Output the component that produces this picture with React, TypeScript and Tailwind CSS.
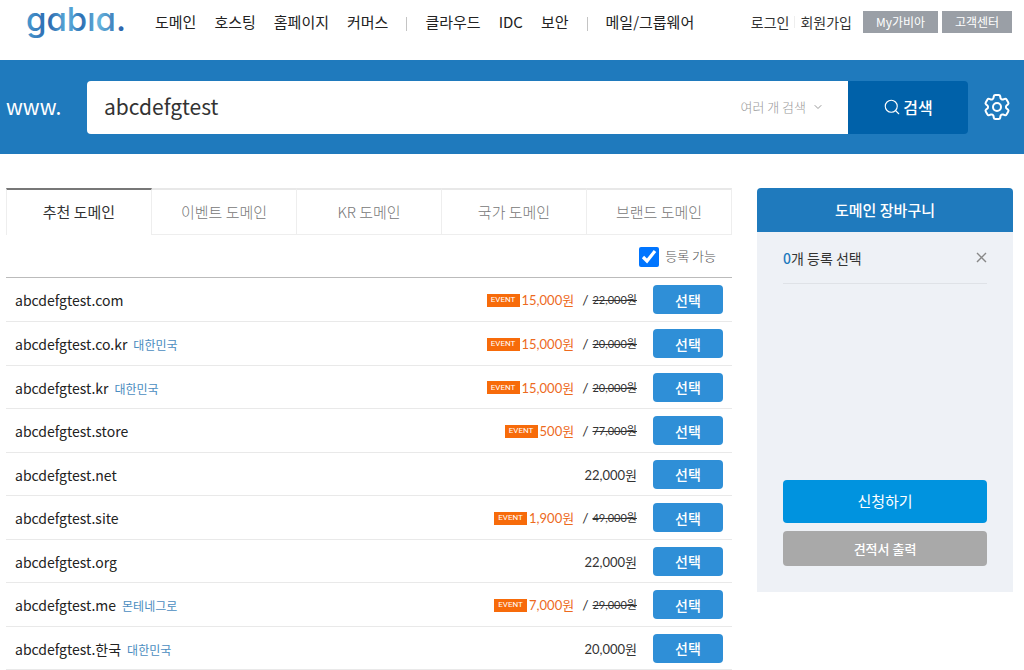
import React, { useState } from 'react';
import { ChevronDown, Search } from 'lucide-react';
import { HiOutlineCog6Tooth } from 'react-icons/hi2';

interface Domain {
  name: string;
  country?: string;
  price: string;
  before?: string;
}

const MENU = [
  ['도메인', '호스팅', '홈페이지', '커머스'],
  ['클라우드', 'IDC', '보안'],
  ['메일/그룹웨어'],
];

const TABS = ['추천 도메인', '이벤트 도메인', 'KR 도메인', '국가 도메인', '브랜드 도메인'];

const DOMAINS: Domain[] = [
  { name: 'abcdefgtest.com', price: '15,000원', before: '22,000원' },
  { name: 'abcdefgtest.co.kr', country: '대한민국', price: '15,000원', before: '20,000원' },
  { name: 'abcdefgtest.kr', country: '대한민국', price: '15,000원', before: '20,000원' },
  { name: 'abcdefgtest.store', price: '500원', before: '77,000원' },
  { name: 'abcdefgtest.net', price: '22,000원' },
  { name: 'abcdefgtest.site', price: '1,900원', before: '49,000원' },
  { name: 'abcdefgtest.org', price: '22,000원' },
  { name: 'abcdefgtest.me', country: '몬테네그로', price: '7,000원', before: '29,000원' },
  { name: 'abcdefgtest.한국', country: '대한민국', price: '20,000원' },
];

const Logo = () => (
  <svg width="108" height="44" viewBox="0 0 108 44" role="img" aria-label="gabia">
    <defs>
      <linearGradient id="logo" x1="0" y1="0" x2="1" y2="0">
        <stop offset="0" stopColor="#4a9bd0" />
        <stop offset="0.22" stopColor="#2a66ad" />
        <stop offset="0.42" stopColor="#5fb0dc" />
        <stop offset="0.56" stopColor="#2d70b4" />
        <stop offset="0.72" stopColor="#68b7de" />
        <stop offset="1" stopColor="#2457a3" />
      </linearGradient>
    </defs>
    <text
      x="0"
      y="31"
      fill="url(#logo)"
      className="font-['Inter',sans-serif] text-[33px] font-medium [font-feature-settings:'cv11']"
    >
      gabıa.
    </text>
  </svg>
);

const Close = () => (
  <svg width="11" height="11" viewBox="0 0 11 11" fill="none" stroke="currentColor" strokeWidth="1.4">
    <path d="M1 1l9 9M10 1l-9 9" />
  </svg>
);

function Header() {
  return (
    <header className="flex h-[60px] items-start justify-between pr-3 pl-[26px]">
      <div className="flex">
        <a href="#home" className="w-[129px]">
          <Logo />
        </a>
        <nav className="flex h-11 items-center gap-[18px] text-[15px] text-[#222]">
          {MENU.map((group, i) => (
            <React.Fragment key={i}>
              {i > 0 && <span className="mt-1 h-[14px] w-px bg-[#c4c4c4]" />}
              {group.map((item) => (
                <a key={item} href="#menu" className="whitespace-nowrap">{item}</a>
              ))}
            </React.Fragment>
          ))}
        </nav>
      </div>
      <div className="flex h-11 items-center whitespace-nowrap text-sm text-[#333]">
        <a href="#login">로그인</a>
        <span className="mx-[5px] h-3 w-px bg-[#eee]" />
        <a href="#join">회원가입</a>
        <a href="#my" className="ml-[11px] flex h-[22px] w-[75px] items-center justify-center bg-[#9a9fa6] text-xs text-white">
          My가비아
        </a>
        <a href="#help" className="ml-1 flex h-[22px] w-[70px] items-center justify-center bg-[#9a9fa6] text-xs text-white">
          고객센터
        </a>
      </div>
    </header>
  );
}

function SearchBar() {
  const [query, setQuery] = useState('abcdefgtest');

  return (
    <form onSubmit={(e) => e.preventDefault()} className="flex h-[94px] items-center bg-[#1f7abd] pr-[11px] pl-[6px]">
      <label htmlFor="domain" className="w-[81px] text-[21px] text-white">www.</label>
      <div className="flex h-[53px] flex-1 items-center rounded-l bg-white pr-6 pl-[17px]">
        <input
          id="domain"
          type="text"
          value={query}
          onChange={(e) => setQuery(e.target.value)}
          className="min-w-0 flex-1 bg-transparent text-[21px] text-[#333] outline-none"
        />
        <button type="button" className="flex items-center gap-[6px] text-[13px] font-light text-[#999]">
          여러 개 검색
          <ChevronDown className="h-3 w-3" />
        </button>
      </div>
      <button type="submit" className="flex h-[53px] w-[120px] items-center justify-center gap-[2px] rounded-r bg-[#0061a9] font-medium text-white">
        <Search className="h-[18px] w-[18px]" strokeWidth={1.5} />
        검색
      </button>
      <button type="button" aria-label="설정" className="ml-[13px] text-white">
        <HiOutlineCog6Tooth className="h-8 w-8" />
      </button>
    </form>
  );
}

function DomainRow({ domain }: { domain: Domain }) {
  return (
    <tr className="h-[43px] border-b border-[#e9e9e9] even:h-11">
      <td className="pt-[2px] pl-[9px] text-sm leading-5 text-[#222]">
        {domain.name}
        {domain.country && <span className="ml-[6px] text-xs text-[#4b8dc0]">{domain.country}</span>}
      </td>
      <td className="pr-4">
        <div className="flex items-center justify-end pt-[2px] font-['Lato','Noto_Sans_CJK_KR',sans-serif] text-[13px] leading-5 text-[#333]">
          {domain.before ? (
            <>
              <span className="mr-[2px] flex h-[13px] w-[33px] items-center justify-center bg-[#f76b0a] font-['Roboto',sans-serif] text-[8px] text-white">EVENT</span>
              <span className="text-[#ed6a1e]">{domain.price}</span>
              <span className="mr-1 ml-2 text-sm">/</span>
              <s className="text-[11px]">{domain.before}</s>
            </>
          ) : (
            <span>{domain.price}</span>
          )}
        </div>
      </td>
      <td className="w-[79px] pt-px">
        <button type="button" className="block h-[29px] w-[70px] rounded-sm bg-[#2f8fd7] text-sm font-medium text-white">
          선택
        </button>
      </td>
    </tr>
  );
}

function Results() {
  const [tab, setTab] = useState(0);

  return (
    <section className="min-w-0 flex-1">
      <div role="tablist" className="flex">
        {TABS.map((label, i) => (
          <button
            key={label}
            type="button"
            role="tab"
            aria-selected={tab === i}
            onClick={() => setTab(i)}
            className={
              tab === i
                ? 'h-[47px] flex-1 border-t-2 border-x border-t-[#777] border-x-[#eee] text-[15px] text-[#333]'
                : 'h-[47px] flex-1 border-t-2 border-r border-b border-t-[#e8e8e8] border-r-[#eee] border-b-[#eee] text-[15px] font-light text-[#777]'
            }
          >
            {label}
          </button>
        ))}
      </div>
      <div className="flex h-[43px] items-center justify-end border-b border-[#bbb] pr-4">
        <label className="flex items-center gap-[6px] text-[13px] font-light text-[#555]">
          <input type="checkbox" defaultChecked className="mt-[2px] h-5 w-5 accent-[#0075ff]" />
          등록 가능
        </label>
      </div>
      <table className="w-full border-collapse">
        <tbody>
          {DOMAINS.map((domain) => (
            <DomainRow key={domain.name} domain={domain} />
          ))}
        </tbody>
      </table>
    </section>
  );
}

function Cart() {
  return (
    <aside className="w-64 shrink-0 self-start">
      <h2 className="flex h-11 items-center justify-center rounded-t bg-[#1f7abd] text-[15px] font-medium text-white">
        도메인 장바구니
      </h2>
      <div className="bg-[#eef1f6] px-[26px] pt-2 pb-[26px]">
        <div className="flex h-11 items-center justify-between border-b border-[#dfe2e7] pb-2 text-sm text-[#333]">
          <p>
            <strong className="font-medium text-[#1f7abd]">0</strong>개 등록 선택
          </p>
          <button type="button" aria-label="모두 삭제" className="text-[#888]">
            <Close />
          </button>
        </div>
        <div className="h-[196px]" />
        <button type="button" className="block h-[43px] w-full rounded-sm bg-[#0093df] text-[15px] text-white">
          신청하기
        </button>
        <button type="button" className="mt-2 block h-[35px] w-full rounded-sm bg-[#a9a9a9] text-[13px] font-medium text-white">
          견적서 출력
        </button>
      </div>
    </aside>
  );
}

export default function App() {
  return (
    <div className="min-h-screen bg-white font-['Noto_Sans_CJK_KR',sans-serif]">
      <Header />
      <SearchBar />
      <main className="flex gap-[25px] pt-[34px] pr-[11px] pl-[6px]">
        <Results />
        <Cart />
      </main>
    </div>
  );
}
